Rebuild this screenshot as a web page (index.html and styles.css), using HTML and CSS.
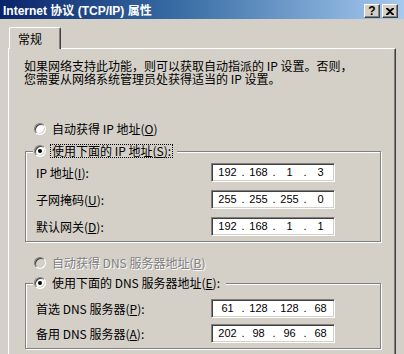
FILE: index.html
```html
<!DOCTYPE html>
<html lang="zh-CN">
<head>
<meta charset="utf-8">
<title>Internet 协议 (TCP/IP) 属性</title>
<link rel="stylesheet" href="styles.css">
</head>
<body>
<div class="window">
  <div class="titlebar">
    <span class="title">Internet 协议 (TCP/IP) 属性</span>
    <div class="tbtns">
      <span class="tbtn help">?</span>
      <span class="tbtn close"><svg width="8" height="7" viewBox="0 0 8 7"><path d="M0 0h2l2 2 2-2h2v1L5 3.5 8 6v1H6L4 5 2 7H0V6l3-2.5L0 1z" fill="#000"/></svg></span>
    </div>
  </div>
  <div class="body">
    <div class="tabs"><div class="tab">常规</div></div>
    <div class="panel">
      <p class="intro">如果网络支持此功能，则可以获取自动指派的 IP 设置。否则，<br>您需要从网络系统管理员处获得适当的 IP 设置。</p>

      <div class="radio-row first"><span class="radio"></span><span>自动获得 IP 地址(<u>O</u>)</span></div>

      <fieldset class="group ipgroup">
        <legend><span class="radio checked"></span><span class="focus">使用下面的 IP 地址(<u>S</u>):</span></legend>
        <div class="field"><span class="lbl">IP 地址(<u>I</u>):</span><div class="ipbox"><span>192</span><i>.</i><span>168</span><i>.</i><span>1</span><i>.</i><span>3</span></div></div>
        <div class="field"><span class="lbl">子网掩码(<u>U</u>):</span><div class="ipbox"><span>255</span><i>.</i><span>255</span><i>.</i><span>255</span><i>.</i><span>0</span></div></div>
        <div class="field"><span class="lbl">默认网关(<u>D</u>):</span><div class="ipbox"><span>192</span><i>.</i><span>168</span><i>.</i><span>1</span><i>.</i><span>1</span></div></div>
      </fieldset>

      <div class="radio-row disabled"><span class="radio"></span><span>自动获得 DNS 服务器地址(<u>B</u>)</span></div>

      <fieldset class="group dnsgroup">
        <legend><span class="radio checked"></span><span class="plain">使用下面的 DNS 服务器地址(<u>E</u>):</span></legend>
        <div class="field"><span class="lbl">首选 DNS 服务器(<u>P</u>):</span><div class="ipbox"><span>61</span><i>.</i><span>128</span><i>.</i><span>128</span><i>.</i><span>68</span></div></div>
        <div class="field"><span class="lbl">备用 DNS 服务器(<u>A</u>):</span><div class="ipbox"><span>202</span><i>.</i><span>98</span><i>.</i><span>96</span><i>.</i><span>68</span></div></div>
      </fieldset>
    </div>
  </div>
</div>
</body>
</html>
```
FILE: styles.css
```css
html, body {
  margin: 0;
  padding: 0;
}
body {
  width: 404px;
  height: 354px;
  overflow: hidden;
  background: #d4d0c8;
  color: #000;
  font-family: "Noto Sans CJK SC", sans-serif;
  font-size: 12px;
  line-height: 13px;
}
.window {
  display: flex;
  flex-direction: column;
}
.titlebar {
  height: 19px;
  box-sizing: border-box;
  padding: 3px 6px 0 3px;
  display: flex;
  align-items: center;
  justify-content: space-between;
  background: linear-gradient(to right, #0a246a 0%, #3a6ea5 45%, #a6caf0 100%);
}
.title {
  color: #fff;
  font-family: "Liberation Sans", "Noto Sans CJK SC", sans-serif;
  font-weight: bold;
  font-size: 12px;
  line-height: 14px;
  white-space: nowrap;
}
.tbtns {
  display: flex;
  gap: 2px;
}
.tbtn {
  width: 16px;
  height: 14px;
  box-sizing: border-box;
  background: #d4d0c8;
  border: 1px solid;
  border-color: #fff #404040 #404040 #fff;
  box-shadow: inset -1px -1px 0 #808080;
  display: flex;
  align-items: center;
  justify-content: center;
  font-family: "Liberation Sans", sans-serif;
  font-weight: bold;
  font-size: 12px;
  line-height: 12px;
}
.tbtn svg { display: block; }
.body {
  padding: 0 8px;
}
.tabs {
  height: 29px;
  display: flex;
  align-items: flex-end;
}
.tab {
  position: relative;
  width: 52px;
  height: 22px;
  box-sizing: border-box;
  margin-left: 1px;
  margin-bottom: -1px;
  padding: 4px 0 0 8px;
  background: #d4d0c8;
  border-top: 1px solid #fff;
  border-left: 1px solid #fff;
  border-right: 1px solid #404040;
  box-shadow: inset -1px 0 0 #808080;
  border-radius: 2px 2px 0 0;
}
.panel {
  height: 320px;
  box-sizing: border-box;
  padding: 10px 14px 0 15px;
  border-top: 1px solid #fff;
  border-left: 1px solid #fff;
  border-right: 1px solid #404040;
  box-shadow: inset -1px 0 0 #808080;
}
.intro {
  margin: 0;
  white-space: nowrap;
}
.radio-row {
  display: flex;
  align-items: center;
  gap: 6px;
  height: 13px;
  margin-left: 10px;
  white-space: nowrap;
}
.radio-row.first {
  margin-top: 37px;
}
.radio-row.disabled {
  margin-top: 14px;
  color: #808080;
  text-shadow: 1px 1px 0 #fff;
}
.radio {
  position: relative;
  flex: none;
  width: 12px;
  height: 12px;
  box-sizing: border-box;
  border-radius: 50%;
  background: #fff;
  border: 1px solid;
  border-color: #808080 #fff #fff #808080;
  box-shadow: inset 1px 1px 0 #404040, inset -1px -1px 0 #d4d0c8;
}
.radio-row.disabled .radio {
  background: #d4d0c8;
}
.radio.checked::after {
  content: "";
  position: absolute;
  left: 3px;
  top: 3px;
  width: 4px;
  height: 4px;
  border-radius: 50%;
  background: #000;
}
.group {
  margin: 9px 0 0 1px;
  padding: 5px 0 5px 10px;
  border: 1px solid #808080;
  box-shadow: 1px 1px 0 #fff, inset 1px 1px 0 #fff;
  min-width: 0;
}
.dnsgroup {
  margin-top: 7px;
  padding-top: 9px;
}
.group legend {
  display: flex;
  align-items: center;
  gap: 4px;
  margin-left: -3px;
  padding: 0 4px 0 1px;
  background: #d4d0c8;
  white-space: nowrap;
}
.focus {
  border: 1px dotted #000;
  padding: 0 1px;
  line-height: 12px;
}
.plain {
  padding: 1px 2px;
  line-height: 12px;
}
.field {
  display: flex;
  align-items: center;
  margin-bottom: 8px;
}
.dnsgroup .field {
  margin-bottom: 6px;
}
.field:last-child {
  margin-bottom: 0;
}
.lbl {
  width: 175px;
  white-space: nowrap;
}
.ipbox {
  width: 124px;
  height: 19px;
  box-sizing: border-box;
  display: flex;
  align-items: center;
  padding-left: 2px;
  background: #fff;
  border: 1px solid;
  border-color: #808080 #fff #fff #808080;
  box-shadow: inset 1px 1px 0 #404040, inset -1px -1px 0 #d4d0c8;
  font-family: "Liberation Sans", sans-serif;
  font-size: 11px;
  line-height: 13px;
}
.ipbox span {
  width: 27px;
  text-align: center;
}
.ipbox i {
  font-style: normal;
  width: 4px;
  text-align: center;
}
```
